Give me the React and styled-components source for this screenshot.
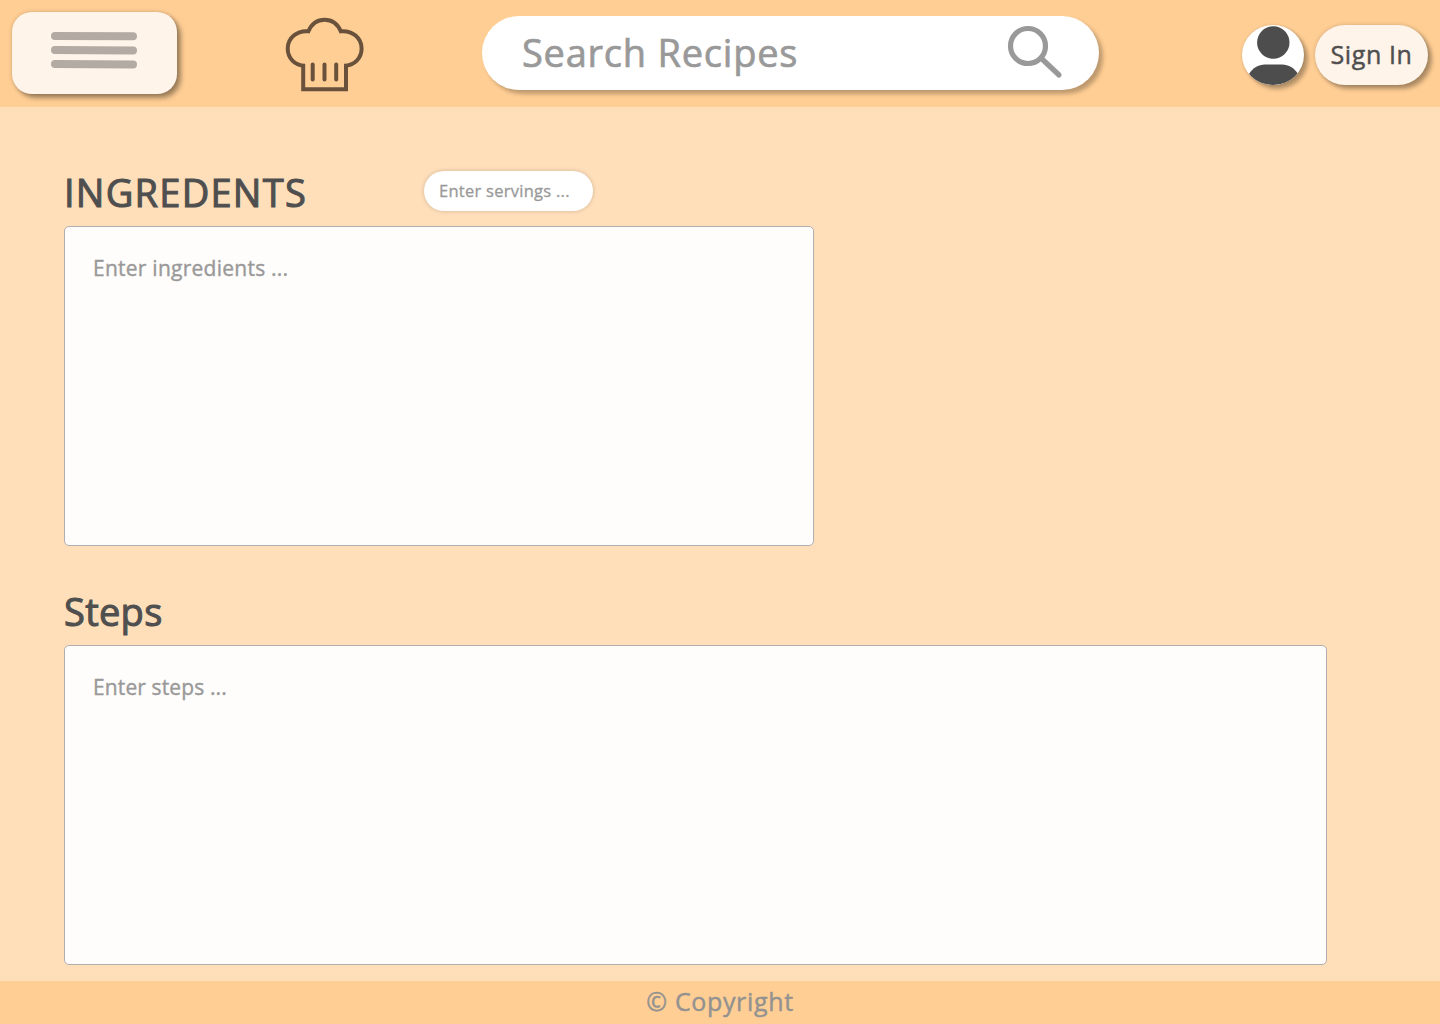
import React from 'react';
import styled, { createGlobalStyle } from 'styled-components';

const GlobalStyle = createGlobalStyle`
  * { box-sizing: border-box; }
  body { margin: 0; background: #ffdfba; font-family: 'Open Sans', 'Noto Sans', sans-serif; }
  button { font: inherit; border: 0; padding: 0; cursor: pointer; }
  svg { display: block; }
`;

const Page = styled.div`
  display: flex;
  flex-direction: column;
  width: 1440px;
  height: 1024px;
  overflow: hidden;
`;

const Header = styled.header`
  display: flex;
  flex: none;
  align-items: flex-start;
  height: 107px;
  padding-left: 12px;
  background: #ffce94;
`;

const MenuButton = styled.button`
  display: flex;
  justify-content: center;
  width: 165px;
  height: 82px;
  margin-top: 12px;
  padding: 19px 2px 0 0;
  border-radius: 20px;
  background: #fff4e9;
  box-shadow: 4px 4px 5px rgba(0, 0, 0, 0.36), 0 0 4px rgba(0, 0, 0, 0.18);
`;

const Logo = styled.div`
  margin: 15px 0 0 106px;
`;

const SearchBar = styled.div`
  display: flex;
  align-items: flex-start;
  justify-content: space-between;
  width: 617px;
  height: 74px;
  margin: 16px 0 0 116px;
  padding: 0 36px 0 40px;
  border-radius: 37px;
  background: #fff;
  box-shadow: 4px 4px 4px rgba(0, 0, 0, 0.26);

  svg { margin-top: 8px; }
`;

const Text = styled.span`
  color: ${(p) => p.$color || '#999'};
  font-size: ${(p) => p.$size}px;
  line-height: ${(p) => p.$line}px;
  letter-spacing: ${(p) => p.$spacing || 0}px;
  -webkit-text-stroke: 0.018em currentColor;
  white-space: nowrap;
`;

const Avatar = styled.button`
  width: 62px;
  height: 60px;
  margin: 25px 0 0 143px;
  overflow: hidden;
  border-radius: 50%;
  background: #fff;
  box-shadow: 4px 4px 4px rgba(0, 0, 0, 0.3), 0 0 3px rgba(0, 0, 0, 0.14);
`;

const SignIn = styled.button`
  display: flex;
  align-items: flex-start;
  justify-content: center;
  width: 113px;
  height: 60px;
  margin: 25px 0 0 11px;
  border-radius: 30px;
  background: #fff4e9;
  box-shadow: 4px 4px 4px rgba(0, 0, 0, 0.3), 0 0 4px rgba(0, 0, 0, 0.18);
`;

const Main = styled.main`
  flex: 1;
  min-height: 0;
  padding: 64px 64px 0;
`;

const SectionHead = styled.div`
  display: flex;
  align-items: flex-start;
  height: 55px;
`;

const Title = styled.h2`
  width: 360px;
  margin: 0;
  color: #4f4f4f;
  font-size: 38px;
  font-weight: 400;
  line-height: 42px;
  letter-spacing: ${(p) => p.$spacing}px;
  -webkit-text-stroke: 0.028em currentColor;
  white-space: nowrap;
`;

const Servings = styled.div`
  display: flex;
  align-items: center;
  width: 169px;
  height: 40px;
  padding-left: 15px;
  border-radius: 20px;
  background: #fff;
  box-shadow: 0 0 4px rgba(0, 0, 0, 0.2);
`;

const EntryBox = styled.div`
  width: ${(p) => p.$width}px;
  height: 320px;
  padding: 26px 28px;
  border: 1px solid #b1aeb2;
  border-radius: 5px;
  background: #fffdfb;

  & + ${SectionHead} { margin-top: 44px; }
`;

const Footer = styled.footer`
  display: flex;
  flex: none;
  justify-content: center;
  height: 43px;
  background: #ffce94;
`;

const MenuIcon = () => (
  <svg width="88" height="38" viewBox="50 31 88 38" fill="none" stroke="#b2aaa3" strokeWidth="8" strokeLinecap="round">
    <path d="M55 36L133 36.3M55 50L133 50.4M55 64L133 64.5" />
  </svg>
);

const ChefHat = () => (
  <svg width="83" height="80" viewBox="283 15 83 80" fill="none" stroke="#69513c" strokeWidth="4">
    <path d="M303.2 64.3V89.3H346V64.3" />
    <path d="M305 65.8C294.5 65.4 287.7 58 287.7 48.5C287.7 38 297 30.2 308.4 31.3C311.4 24.4 317.2 19.8 324.6 19.8C332 19.8 337.8 24.4 340.8 31.3C352.4 30.2 361.6 38 361.6 48.5C361.6 58 354.6 65.4 344.2 65.8" />
    <path d="M312.7 64.5V79.5M324.5 64.5V79.5M336.2 64.5V79.5" strokeLinecap="round" />
  </svg>
);

const SearchIcon = () => (
  <svg width="58" height="56" viewBox="1005 24 58 56" fill="none" stroke="#999" strokeWidth="5.2" strokeLinecap="round">
    <circle cx="1028" cy="46" r="17.5" />
    <path d="M1041.5 58.5L1059 75" />
  </svg>
);

const UserIcon = () => (
  <svg width="62" height="60" viewBox="0 0 62 60" fill="#4d4d4d">
    <circle cx="31.3" cy="17.5" r="16.2" />
    <path d="M7 49C11 43 16 39.5 23 39.5H40C47 39.5 52 43 56 49C50 56 41 60 31 60S12 56 7 49Z" />
  </svg>
);

export default function App() {
  return (
    <Page>
      <GlobalStyle />
      <Header>
        <MenuButton aria-label="Menu"><MenuIcon /></MenuButton>
        <Logo><ChefHat /></Logo>
        <SearchBar>
          <Text $size={38} $line={73} $spacing={0.76}>Search Recipes</Text>
          <SearchIcon />
        </SearchBar>
        <Avatar aria-label="Account"><UserIcon /></Avatar>
        <SignIn><Text $size={25} $line={58} $spacing={0.6} $color="#4f4f4f">Sign In</Text></SignIn>
      </Header>
      <Main>
        <SectionHead>
          <Title $spacing={1.25}>INGREDENTS</Title>
          <Servings><Text $size={16.5} $line={40} $spacing={0.27}>Enter servings ...</Text></Servings>
        </SectionHead>
        <EntryBox $width={750}><Text $size={21} $line={31} $spacing={0.25}>Enter ingredients ...</Text></EntryBox>
        <SectionHead>
          <Title $spacing={0.3}>Steps</Title>
        </SectionHead>
        <EntryBox $width={1263}><Text $size={21} $line={31} $spacing={0.12}>Enter steps ...</Text></EntryBox>
      </Main>
      <Footer><Text $size={25} $line={41} $spacing={0.65} $color="#939290">© Copyright</Text></Footer>
    </Page>
  );
}
